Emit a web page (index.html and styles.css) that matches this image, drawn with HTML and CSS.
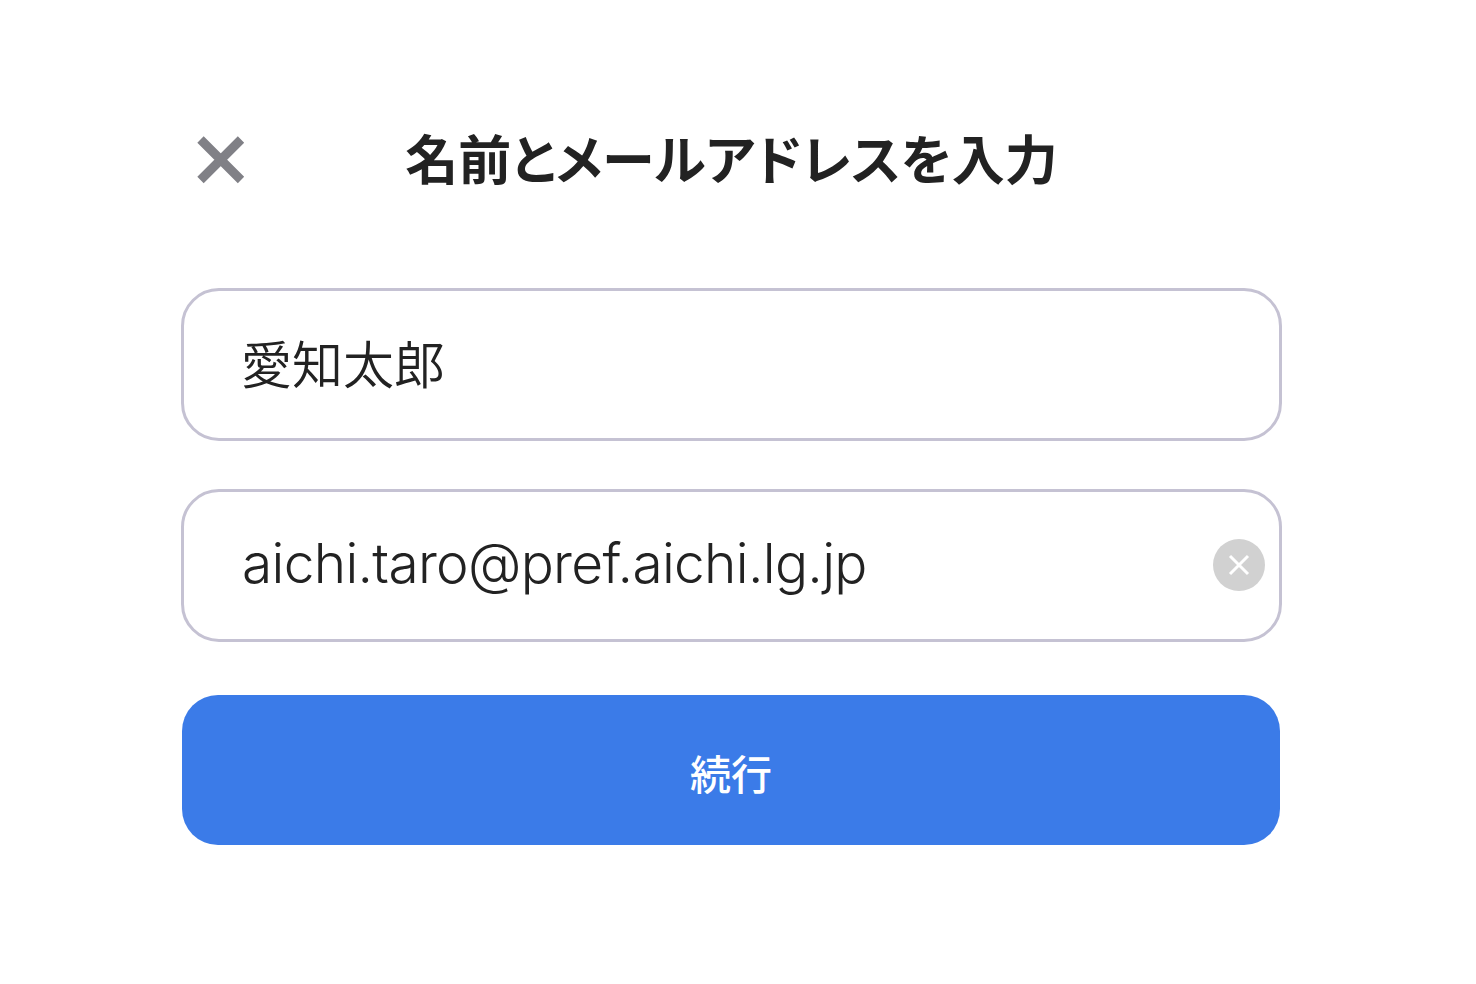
FILE: index.html
```html
<!DOCTYPE html>
<html lang="ja">
<head>
  <meta charset="UTF-8">
  <title>名前とメールアドレスを入力</title>
  <link rel="stylesheet" href="styles.css">
</head>
<body>

  <div class="dialog">
    <div class="header">
      <button class="close-btn" aria-label="閉じる">
        <svg width="48" height="48" viewBox="0 0 48 48">
          <path d="M3.5 3.5 L44 44 M44 3.5 L3.5 44" stroke="#808086" stroke-width="9" fill="none"/>
        </svg>
      </button>
      <h1 class="title">名前とメールアドレスを入力</h1>
    </div>

    <div class="field">
      <span class="field-text name">愛知太郎</span>
    </div>

    <div class="field email">
      <span class="field-text">aichi.taro@pref.aichi.lg.jp</span>
      <span class="clear-btn">
        <svg width="22" height="22" viewBox="0 0 22 22">
          <path d="M2 2 L20 20 M20 2 L2 20" stroke="#fff" stroke-width="3" fill="none"/>
        </svg>
      </span>
    </div>

    <button class="submit-btn">続行</button>
  </div>

</body>
</html>
```

FILE: styles.css
```css
* {
  box-sizing: border-box;
}

body {
  margin: 0;
  background-color: #fff;
  font-family: "Inter", "Noto Sans CJK JP", sans-serif;
  color: #222;
}

.dialog {
  width: 1101px;
  margin-left: 181px;
  padding-top: 130px;
  display: flex;
  flex-direction: column;
}

.header {
  position: relative;
  height: 60px;
  display: flex;
  justify-content: center;
  align-items: center;
  margin-bottom: 98px;
}

.close-btn {
  position: absolute;
  left: 16px;
  top: 6px;
  padding: 0;
  border: none;
  background: none;
  line-height: 0;
}

.title {
  margin: 1px 0 0;
  font-size: 53px;
  font-weight: 700;
  line-height: 60px;
  white-space: nowrap;
  font-feature-settings: "palt";
}

.field {
  height: 153px;
  border: 3px solid #c5c2d3;
  border-radius: 38px;
  padding: 0 14px 0 58px;
  display: flex;
  align-items: center;
  justify-content: space-between;
  margin-bottom: 48px;
}

.field-text {
  font-size: 55px;
  font-weight: 300;
  letter-spacing: -0.7px;
  color: #222;
  white-space: nowrap;
  margin-top: -5px;
}

.field-text.name {
  font-size: 51px;
  font-weight: 350;
  letter-spacing: 0;
  margin-top: -6px;
  margin-left: -1px;
}

.field.email {
  margin-bottom: 53px;
}

.clear-btn {
  width: 52px;
  height: 52px;
  border-radius: 50%;
  background-color: #d1d1d1;
  display: flex;
  align-items: center;
  justify-content: center;
  margin-top: -1px;
}

.submit-btn {
  width: 1098px;
  height: 150px;
  margin-left: 1px;
  border: none;
  border-radius: 36px;
  background-color: #3b7be8;
  color: #fff;
  font-family: inherit;
  font-size: 41px;
  font-weight: 500;
  padding: 4px 0 0 0;
}
```
